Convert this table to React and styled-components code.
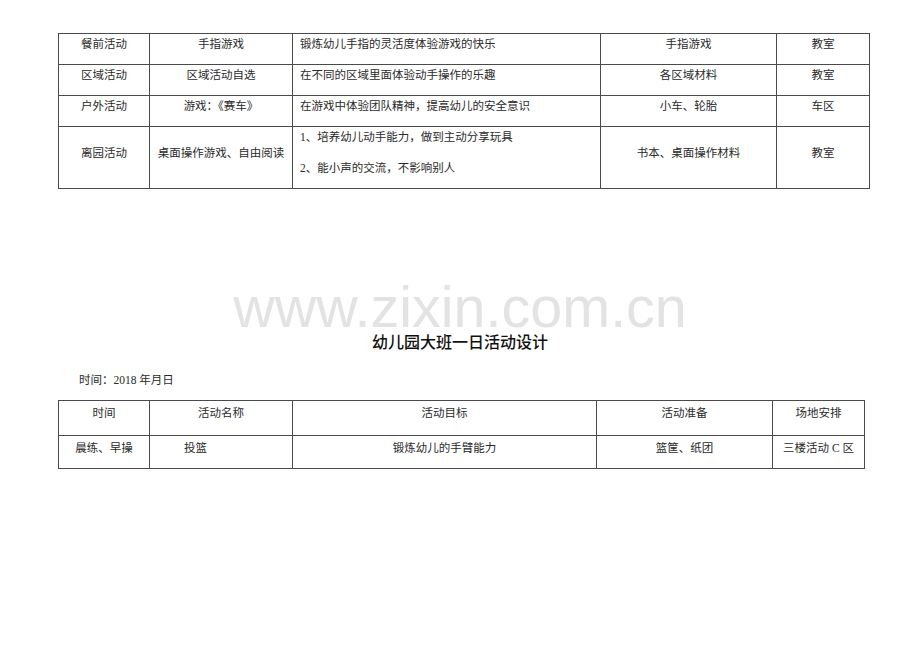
import React from 'react';
import styled, { createGlobalStyle } from 'styled-components';

const GlobalStyle = createGlobalStyle`
  html, body {
    margin: 0;
    padding: 0;
    background: #ffffff;
  }
  body {
    font-family: "Liberation Serif", "Noto Sans CJK SC", serif;
    color: #2a2a2a;
  }
`;

const Page = styled.div`
  position: relative;
  width: 920px;
  height: 651px;
  padding: 33px 0 0 58px;
  box-sizing: border-box;
  overflow: hidden;
`;

const Table = styled.table`
  border-collapse: collapse;
  table-layout: fixed;
  width: ${(p) => p.$width}px;
  font-size: 11.5px;
`;

const Row = styled.tr`
  height: ${(p) => p.$height}px;
`;

const Cell = styled.td`
  border: 1px solid #4a4a4a;
  padding: ${(p) => (p.$top ? '2px 0 0 0' : '0 0 10px 0')};
  vertical-align: ${(p) => (p.$top ? 'top' : 'middle')};
  line-height: 20px;
  text-align: ${(p) => (p.$left ? 'left' : 'center')};
  padding-left: ${(p) => p.$indent || 0}px;
  box-sizing: border-box;
  white-space: nowrap;
  overflow: hidden;
`;

const Line = styled.div`
  & + & {
    margin-top: 11px;
  }
`;

const Title = styled.h1`
  margin: 142px 0 0 0;
  width: 804px;
  text-align: center;
  font-family: "Noto Sans CJK SC", sans-serif;
  font-size: 16px;
  font-weight: 500;
  line-height: 20px;
  color: #111;
`;

const DateLine = styled.div`
  margin: 19px 0 10px 21px;
  font-size: 11.5px;
  line-height: 20px;
`;

const Watermark = styled.div`
  position: absolute;
  left: 0;
  top: 282px;
  width: 920px;
  text-align: center;
  font-family: "Liberation Sans", Arial, sans-serif;
  font-size: 57.5px;
  line-height: 50px;
  color: #e3e3e3;
  pointer-events: none;
  user-select: none;
`;

const firstCols = [91, 143, 308, 176, 93];
const secondCols = [91, 143, 304, 176, 92];

const morning = [
  { time: '餐前活动', name: '手指游戏', goal: ['锻炼幼儿手指的灵活度体验游戏的快乐'], prep: '手指游戏', place: '教室', h: 30 },
  { time: '区域活动', name: '区域活动自选', goal: ['在不同的区域里面体验动手操作的乐趣'], prep: '各区域材料', place: '教室', h: 30 },
  { time: '户外活动', name: '游戏：《赛车》', goal: ['在游戏中体验团队精神，提高幼儿的安全意识'], prep: '小车、轮胎', place: '车区', h: 30 },
  { time: '离园活动', name: '桌面操作游戏、自由阅读', goal: ['1、培养幼儿动手能力，做到主动分享玩具', '2、能小声的交流，不影响别人'], prep: '书本、桌面操作材料', place: '教室', h: 61 },
];

const Cols = ({ widths }) => (
  <colgroup>
    {widths.map((w, i) => (
      <col key={i} style={{ width: w }} />
    ))}
  </colgroup>
);

const App = () => {
  return (
    <Page>
      <GlobalStyle />
      <Table $width={811}>
        <Cols widths={firstCols} />
        <tbody>
          {morning.map((r) => (
            <Row key={r.time} $height={r.h}>
              <Cell>{r.time}</Cell>
              <Cell>{r.name}</Cell>
              <Cell $left $indent={7}>
                {r.goal.map((g) => (
                  <Line key={g}>{g}</Line>
                ))}
              </Cell>
              <Cell>{r.prep}</Cell>
              <Cell>{r.place}</Cell>
            </Row>
          ))}
        </tbody>
      </Table>

      <Watermark>www.zixin.com.cn</Watermark>

      <Title>幼儿园大班一日活动设计</Title>
      <DateLine>时间：2018 年月日</DateLine>

      <Table $width={806}>
        <Cols widths={secondCols} />
        <tbody>
          <Row $height={35}>
            <Cell $top>时间</Cell>
            <Cell $top>活动名称</Cell>
            <Cell $top>活动目标</Cell>
            <Cell $top>活动准备</Cell>
            <Cell $top>场地安排</Cell>
          </Row>
          <Row $height={33}>
            <Cell $top>晨练、早操</Cell>
            <Cell $top $left $indent={34}>投篮</Cell>
            <Cell $top>锻炼幼儿的手臂能力</Cell>
            <Cell $top>篮筐、纸团</Cell>
            <Cell $top>三楼活动 C 区</Cell>
          </Row>
        </tbody>
      </Table>
    </Page>
  );
};

export default App;
